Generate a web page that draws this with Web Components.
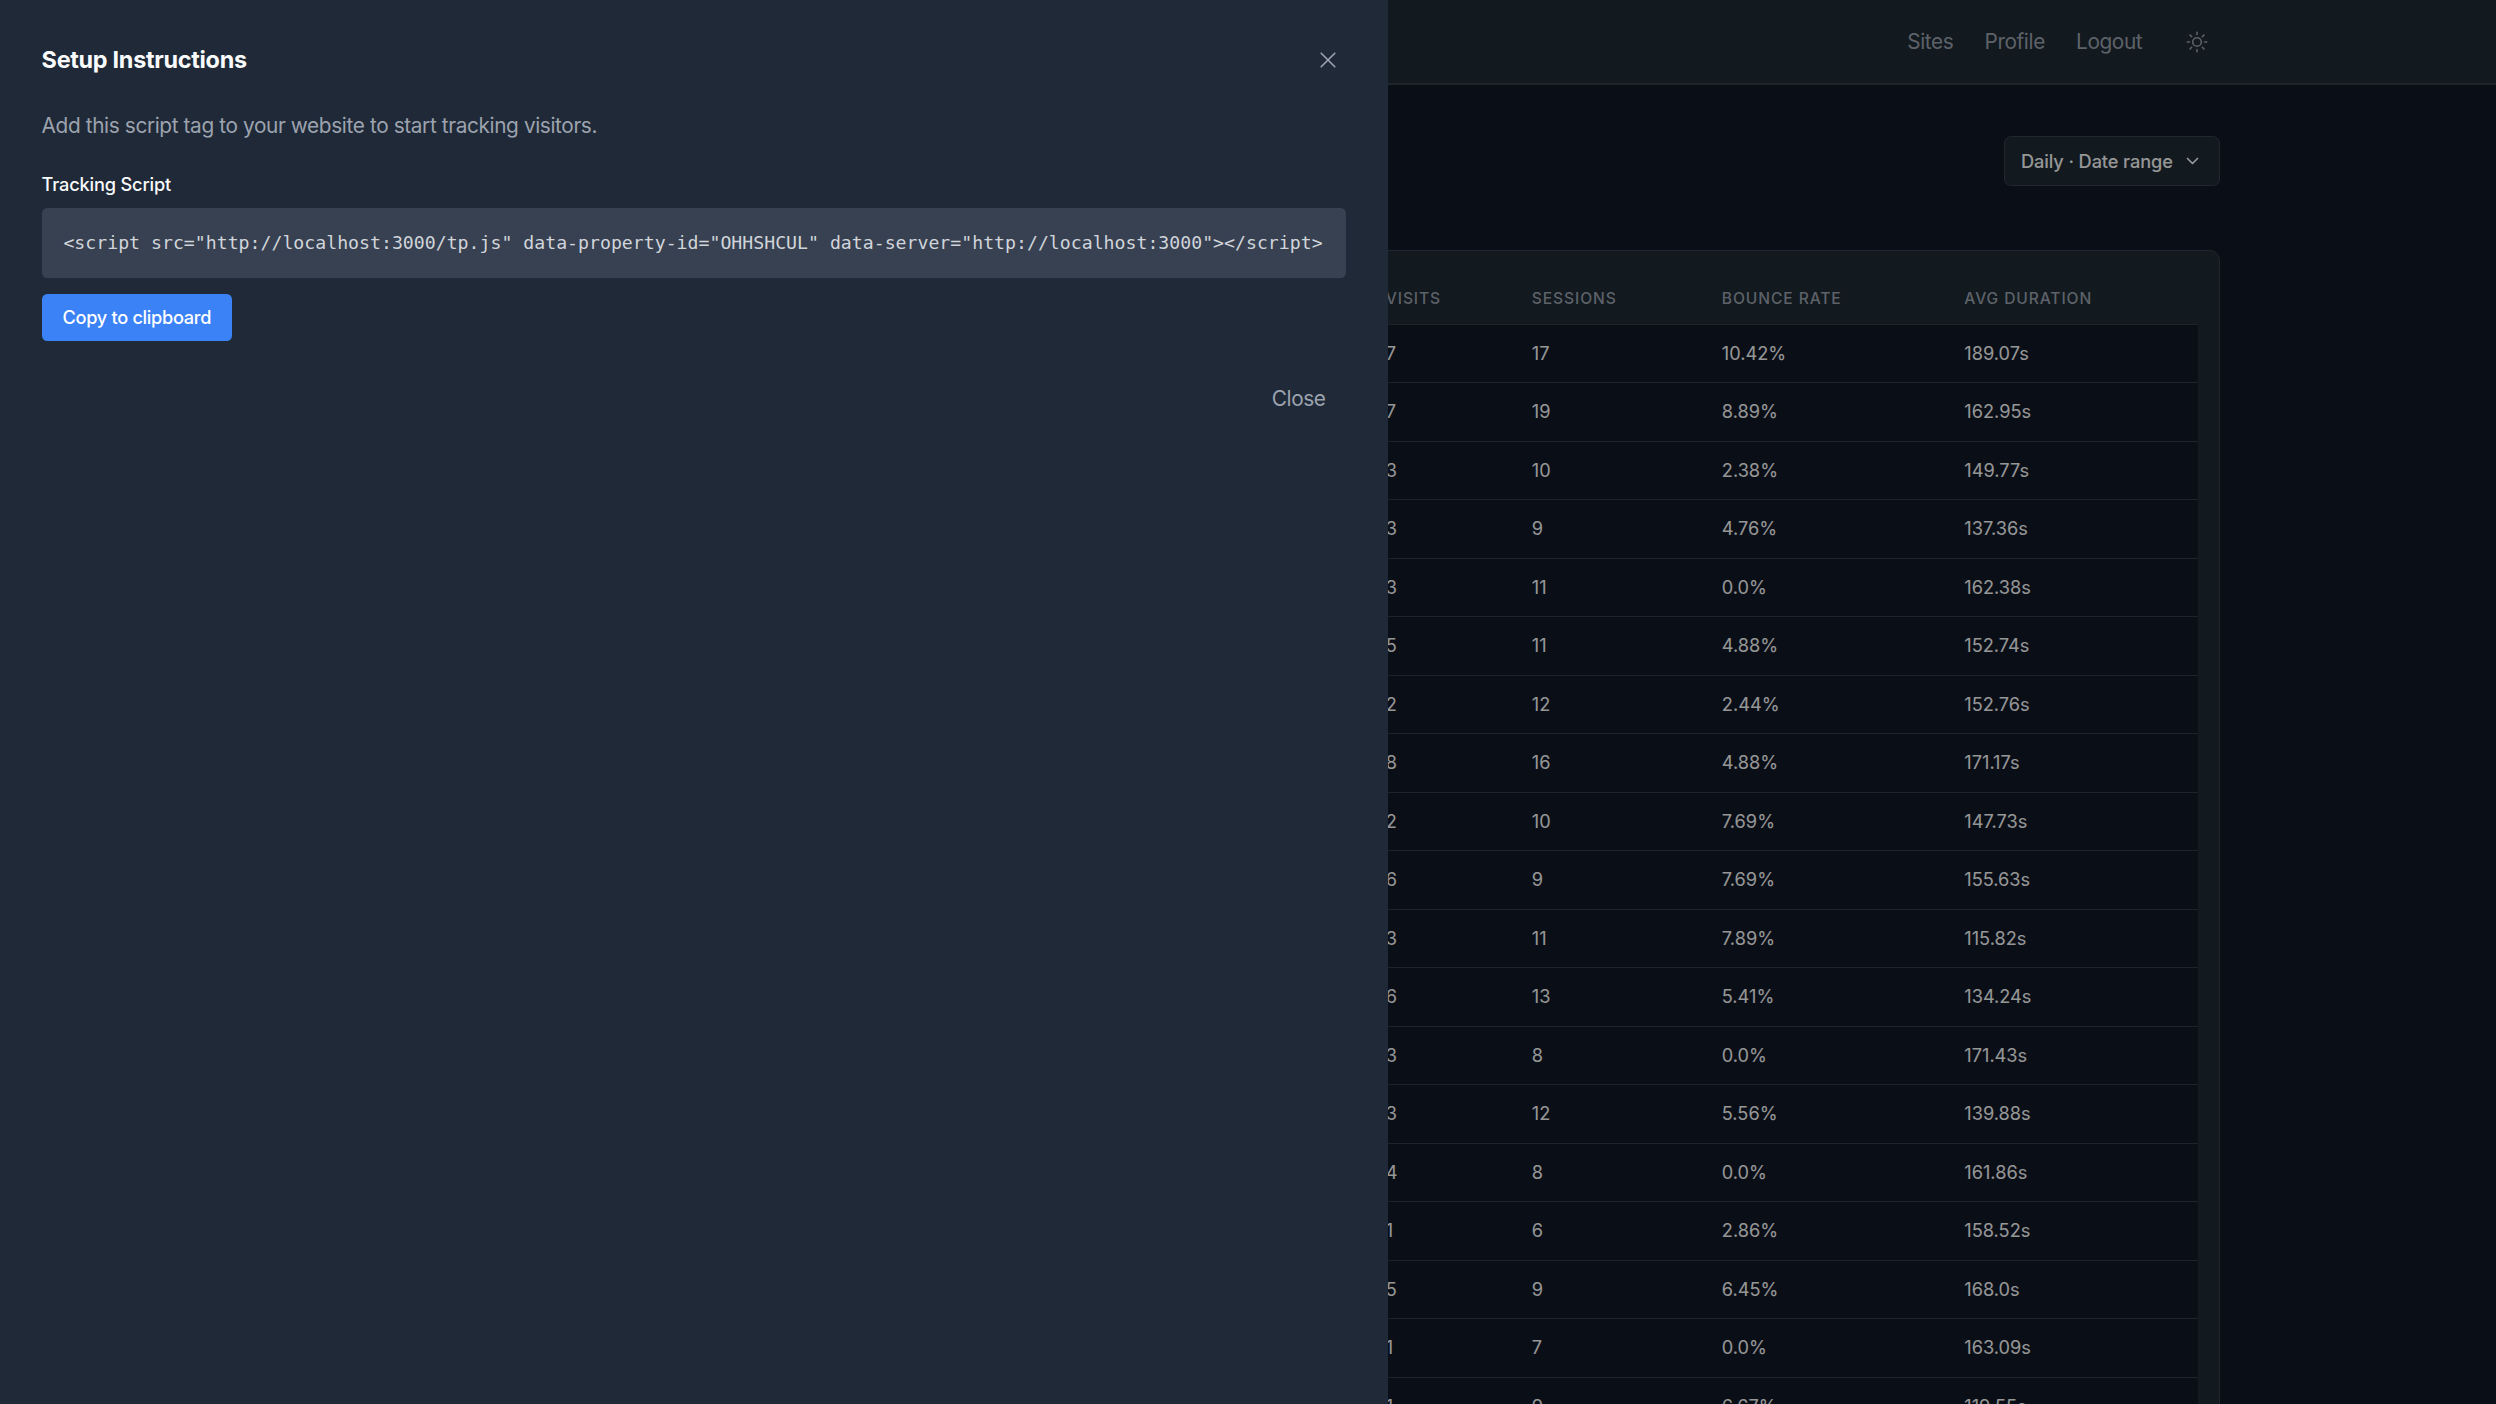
<!DOCTYPE html>
<html lang="en">
<head>
<meta charset="UTF-8">
<title>Setup Instructions</title>
<style>
  :root{
    --bg:#111827;
    --surface:#1f2937;
    --line:#313a48;
    --text:#f9fafb;
    --muted:#9ca3af;
    --primary:#3b82f6;
  }
  body{
    margin:0;
    height:1404px;
    overflow:hidden;
    background:var(--bg);
    color:var(--text);
    font-family:Inter, sans-serif;
    font-size:20.8px;
    line-height:31.2px;
  }
</style>
</head>
<body>
<analytics-page></analytics-page>
<setup-drawer heading="Setup Instructions">
  <p slot="intro" style="margin:0">Add this script tag to your website to start tracking visitors.</p>
  <tracking-snippet label="Tracking Script">&lt;script src="http://localhost:3000/tp.js" data-property-id="OHHSHCUL" data-server="http://localhost:3000"&gt;&lt;/script&gt;</tracking-snippet>
</setup-drawer>

<script>
class NavBar extends HTMLElement {
    constructor() {
        super();
        this.attachShadow({ mode: 'open' });
    }

    static get styles() {
        return /*css*/`
        :host{
            display:block;
            box-sizing:border-box;
            height:85px;
            background:#1f2a34;
            border-bottom:2px solid #323e4b;
        }
        nav{
            display:flex;
            justify-content:flex-end;
            align-items:center;
            gap:31.2px;
            height:83px;
            padding-right:288px;
            color:var(--muted);
            letter-spacing:-.4px;
        }
        svg{
            display:block;
            width:22px;
            height:22px;
            margin-left:12.6px;
        }
        `;
    }

    connectedCallback() {
        this.shadowRoot.innerHTML = /*html*/`
        <style>${NavBar.styles}</style>
        <nav>
            <span>Sites</span>
            <span>Profile</span>
            <span>Logout</span>
            <svg viewBox="0 0 22 22" fill="none" stroke="currentColor" stroke-width="1.6" stroke-linecap="round">
                <circle cx="11" cy="11" r="4.3"/>
                <path d="M11 1.3v2.2M11 18.5v2.2M1.3 11h2.2M18.5 11h2.2M4.1 4.1l1.6 1.6M16.3 16.3l1.6 1.6M4.1 17.9l1.6-1.6M16.3 5.7l1.6-1.6"/>
            </svg>
        </nav>
        `;
    }
}
customElements.define('nav-bar', NavBar);

class RangeButton extends HTMLElement {
    constructor() {
        super();
        this.attachShadow({ mode: 'open' });
    }

    static get styles() {
        return /*css*/`
        :host{
            display:flex;
            align-items:center;
            justify-content:space-between;
            box-sizing:border-box;
            width:216px;
            height:50px;
            padding:1px 20px 0 16px;
            background:#1f2a34;
            border:1px solid #374151;
            border-radius:7px;
            font-size:18.2px;
            font-weight:500;
            letter-spacing:-.1px;
            white-space:nowrap;
        }
        svg{
            width:13px;
            height:9px;
        }
        `;
    }

    connectedCallback() {
        this.shadowRoot.innerHTML = /*html*/`
        <style>${RangeButton.styles}</style>
        <slot></slot>
        <svg viewBox="0 0 13 9" fill="none" stroke="currentColor" stroke-width="1.7" stroke-linecap="round" stroke-linejoin="round">
            <path d="M1.5 1.5l5 5 5-5"/>
        </svg>
        `;
    }
}
customElements.define('range-button', RangeButton);

// visits, sessions, bounce rate, avg duration
const rows = [
    ['7', '17', '10.42%', '189.07s'],
    ['7', '19', '8.89%', '162.95s'],
    ['3', '10', '2.38%', '149.77s'],
    ['3', '9', '4.76%', '137.36s'],
    ['3', '11', '0.0%', '162.38s'],
    ['5', '11', '4.88%', '152.74s'],
    ['2', '12', '2.44%', '152.76s'],
    ['8', '16', '4.88%', '171.17s'],
    ['2', '10', '7.69%', '147.73s'],
    ['6', '9', '7.69%', '155.63s'],
    ['3', '11', '7.89%', '115.82s'],
    ['6', '13', '5.41%', '134.24s'],
    ['3', '8', '0.0%', '171.43s'],
    ['3', '12', '5.56%', '139.88s'],
    ['4', '8', '0.0%', '161.86s'],
    ['1', '6', '2.86%', '158.52s'],
    ['5', '9', '6.45%', '168.0s'],
    ['1', '7', '0.0%', '163.09s'],
    ['1', '9', '6.67%', '119.55s']
];

class StatsTable extends HTMLElement {
    constructor() {
        super();
        this.attachShadow({ mode: 'open' });
    }

    static get styles() {
        return /*css*/`
        :host{
            display:block;
            box-sizing:border-box;
            height:1300px;
            padding:20px 21px 0;
            background:#1f2a34;
            border:1px solid #374151;
            border-radius:10.4px;
        }
        .row{
            display:grid;
            grid-template-columns:1fr 146px 190px 242.5px 254.5px;
            align-items:center;
            box-sizing:border-box;
            height:58.5px;
            background:var(--bg);
            border-bottom:1.3px solid var(--line);
            font-size:18.2px;
        }
        .head{
            height:53.5px;
            background:none;
            padding-top:3px;
            font-size:15.6px;
            font-weight:500;
            letter-spacing:.9px;
            color:var(--muted);
        }
        .row > span{
            padding-left:20.8px;
        }
        `;
    }

    row(cells) {
        return `<div class="row"><span></span>${cells.map(c => `<span>${c}</span>`).join('')}</div>`;
    }

    connectedCallback() {
        this.shadowRoot.innerHTML = /*html*/`
        <style>${StatsTable.styles}</style>
        <div class="row head">
            <span></span>
            <span>VISITS</span>
            <span>SESSIONS</span>
            <span>BOUNCE RATE</span>
            <span>AVG DURATION</span>
        </div>
        ${rows.map(r => this.row(r)).join('')}
        `;
    }
}
customElements.define('stats-table', StatsTable);

class AnalyticsPage extends HTMLElement {
    constructor() {
        super();
        this.attachShadow({ mode: 'open' });
    }

    static get styles() {
        return /*css*/`
        :host{
            display:block;
            height:1404px;
            overflow:hidden;
        }
        main{
            padding:51px 276px 0;
        }
        .toolbar{
            display:flex;
            justify-content:flex-end;
            margin-bottom:64px;
        }
        `;
    }

    connectedCallback() {
        this.shadowRoot.innerHTML = /*html*/`
        <style>${AnalyticsPage.styles}</style>
        <nav-bar></nav-bar>
        <main>
            <div class="toolbar"><range-button>Daily · Date range</range-button></div>
            <stats-table></stats-table>
        </main>
        `;
    }
}
customElements.define('analytics-page', AnalyticsPage);

class TrackingSnippet extends HTMLElement {
    constructor() {
        super();
        this.attachShadow({ mode: 'open' });
    }

    static get styles() {
        return /*css*/`
        :host{
            display:block;
            font-size:18.2px;
            line-height:26px;
        }
        .label{
            font-weight:500;
            letter-spacing:-.17px;
            margin-bottom:10.4px;
        }
        pre{
            margin:0 0 16px;
            padding:22px 0 22px 21.8px;
            background:#374151;
            border-radius:5.2px;
            color:#d1d5db;
            font-family:"DejaVu Sans Mono", monospace;
        }
        button{
            display:block;
            width:190.5px;
            height:47px;
            padding:0;
            border:0;
            border-radius:5.2px;
            background:var(--primary);
            color:#fff;
            font:500 18.2px/26px Inter, sans-serif;
            letter-spacing:-.32px;
        }
        `;
    }

    connectedCallback() {
        this.shadowRoot.innerHTML = /*html*/`
        <style>${TrackingSnippet.styles}</style>
        <div class="label">${this.getAttribute('label')}</div>
        <pre><slot></slot></pre>
        <button>Copy to clipboard</button>
        `;
    }
}
customElements.define('tracking-snippet', TrackingSnippet);

class SetupDrawer extends HTMLElement {
    constructor() {
        super();
        this.attachShadow({ mode: 'open' });
    }

    static get styles() {
        return /*css*/`
        :host{
            position:fixed;
            inset:0;
            background:rgba(0,0,0,.4);
        }
        aside{
            box-sizing:border-box;
            width:1388px;
            height:100%;
            padding:41.6px;
            background:var(--surface);
        }
        header{
            display:flex;
            justify-content:space-between;
            align-items:center;
            height:36px;
            margin-bottom:32px;
        }
        h2{
            margin:0;
            font-size:23.4px;
            font-weight:700;
            letter-spacing:-.28px;
        }
        header svg{
            width:16px;
            height:16px;
            margin-right:10.5px;
            color:var(--muted);
        }
        .intro{
            color:var(--muted);
            letter-spacing:-.38px;
            margin-bottom:30.4px;
        }
        footer{
            display:flex;
            justify-content:flex-end;
            margin-top:42px;
            padding-right:20.8px;
            color:var(--muted);
            letter-spacing:-.4px;
        }
        `;
    }

    connectedCallback() {
        this.shadowRoot.innerHTML = /*html*/`
        <style>${SetupDrawer.styles}</style>
        <aside>
            <header>
                <h2>${this.getAttribute('heading')}</h2>
                <svg viewBox="0 0 16 16" fill="none" stroke="currentColor" stroke-width="1.6" stroke-linecap="round">
                    <path d="M1.2 1.2l13.6 13.6M14.8 1.2L1.2 14.8"/>
                </svg>
            </header>
            <div class="intro"><slot name="intro"></slot></div>
            <slot></slot>
            <footer><span>Close</span></footer>
        </aside>
        `;
    }
}
customElements.define('setup-drawer', SetupDrawer);
</script>
</body>
</html>
